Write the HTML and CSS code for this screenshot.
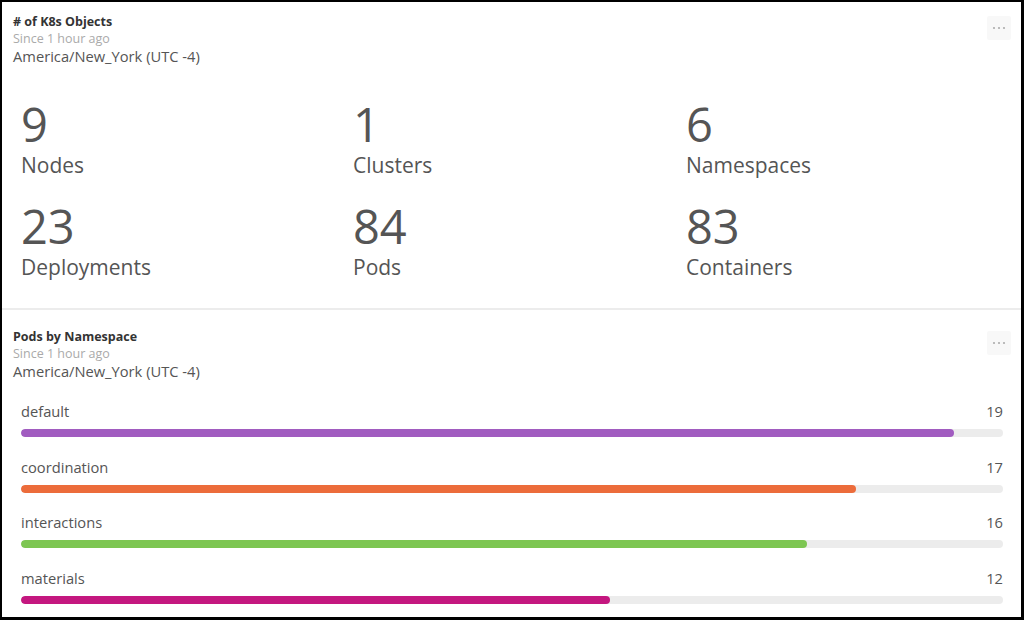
FILE: index.html
```html
<!DOCTYPE html>
<html>
<head>
<meta charset="utf-8">
<link rel="stylesheet" href="styles.css">
</head>
<body>
<div class="frame">
  <section class="panel panel-objects">
    <header class="panel-head">
      <div class="head-text">
        <div class="title"># of K8s Objects</div>
        <div class="since">Since 1 hour ago</div>
        <div class="tz">America/New_York (UTC -4)</div>
      </div>
      <button class="more" aria-label="More"><svg width="14" height="4" viewBox="0 0 14 4"><circle cx="2" cy="2" r="1.1"/><circle cx="7" cy="2" r="1.1"/><circle cx="12" cy="2" r="1.1"/></svg></button>
    </header>
    <div class="stats">
      <div class="stat"><div class="num">9</div><div class="lbl">Nodes</div></div>
      <div class="stat"><div class="num">1</div><div class="lbl">Clusters</div></div>
      <div class="stat"><div class="num">6</div><div class="lbl">Namespaces</div></div>
      <div class="stat"><div class="num">23</div><div class="lbl">Deployments</div></div>
      <div class="stat"><div class="num">84</div><div class="lbl">Pods</div></div>
      <div class="stat"><div class="num">83</div><div class="lbl">Containers</div></div>
    </div>
  </section>
  <section class="panel panel-pods">
    <header class="panel-head">
      <div class="head-text">
        <div class="title">Pods by Namespace</div>
        <div class="since">Since 1 hour ago</div>
        <div class="tz">America/New_York (UTC -4)</div>
      </div>
      <button class="more" aria-label="More"><svg width="14" height="4" viewBox="0 0 14 4"><circle cx="2" cy="2" r="1.1"/><circle cx="7" cy="2" r="1.1"/><circle cx="12" cy="2" r="1.1"/></svg></button>
    </header>
    <div class="bars">
      <div class="bar-row">
        <div class="bar-meta"><span>default</span><span>19</span></div>
        <div class="track"><div class="fill purple" style="width:95%"></div></div>
      </div>
      <div class="bar-row">
        <div class="bar-meta"><span>coordination</span><span>17</span></div>
        <div class="track"><div class="fill orange" style="width:85%"></div></div>
      </div>
      <div class="bar-row">
        <div class="bar-meta"><span>interactions</span><span>16</span></div>
        <div class="track"><div class="fill green" style="width:80%"></div></div>
      </div>
      <div class="bar-row">
        <div class="bar-meta"><span>materials</span><span>12</span></div>
        <div class="track"><div class="fill magenta" style="width:60%"></div></div>
      </div>
    </div>
  </section>
</div>
</body>
</html>
```
FILE: styles.css
```css
* { box-sizing: border-box; }
html, body { margin: 0; padding: 0; background: #000; }
body { font-family: "Open Sans", "Liberation Sans", sans-serif; }

.frame {
  width: 1024px;
  height: 620px;
  border-style: solid;
  border-color: #000;
  border-width: 2px 3px 3px 2px;
  background: #fff;
  display: flex;
  flex-direction: column;
  overflow: hidden;
}

.panel {
  padding: 0 10px 0 11px;
  background: #fff;
}

.panel-objects {
  height: 308px;
  padding-top: 12px;
  border-bottom: 2px solid #ececec;
}

.panel-pods {
  flex: 1;
  padding-top: 19px;
}

.panel-head {
  display: flex;
  justify-content: space-between;
  align-items: flex-start;
}

.title {
  font-size: 12.5px;
  font-weight: 700;
  line-height: 16px;
  color: #333;
}

.since {
  font-size: 12.5px;
  line-height: 17px;
  color: #aaaaaa;
}

.tz {
  font-size: 14.7px;
  line-height: 18px;
  color: #555;
}

.more {
  width: 24px;
  height: 24px;
  margin-top: 2px;
  border: none;
  border-radius: 2px;
  background: #f8f8f8;
  padding: 0;
  display: flex;
  align-items: center;
  justify-content: center;
}

.more svg { display: block; fill: #adadad; }

.stats {
  display: grid;
  grid-template-columns: 332px 333px 1fr;
  row-gap: 20px;
  margin-top: 31px;
  padding-left: 8px;
}

.num {
  font-size: 47px;
  line-height: 56px;
  color: #555;
}

.lbl {
  font-size: 21px;
  line-height: 26px;
  color: #555;
}

.bars {
  display: flex;
  flex-direction: column;
  row-gap: 19.5px;
  margin-top: 21px;
  padding: 0 8px 0 8px;
}

.bar-meta {
  display: flex;
  justify-content: space-between;
  font-size: 14.7px;
  line-height: 20px;
  color: #555;
}

.track {
  margin-top: 8px;
  height: 8px;
  border-radius: 4px;
  background: #ececec;
  overflow: hidden;
}

.fill {
  height: 100%;
  border-radius: 4px;
}

.purple { background: #a15cc0; }
.orange { background: #ec6c3b; }
.green { background: #7dc652; }
.magenta { background: #c4177f; }
```
